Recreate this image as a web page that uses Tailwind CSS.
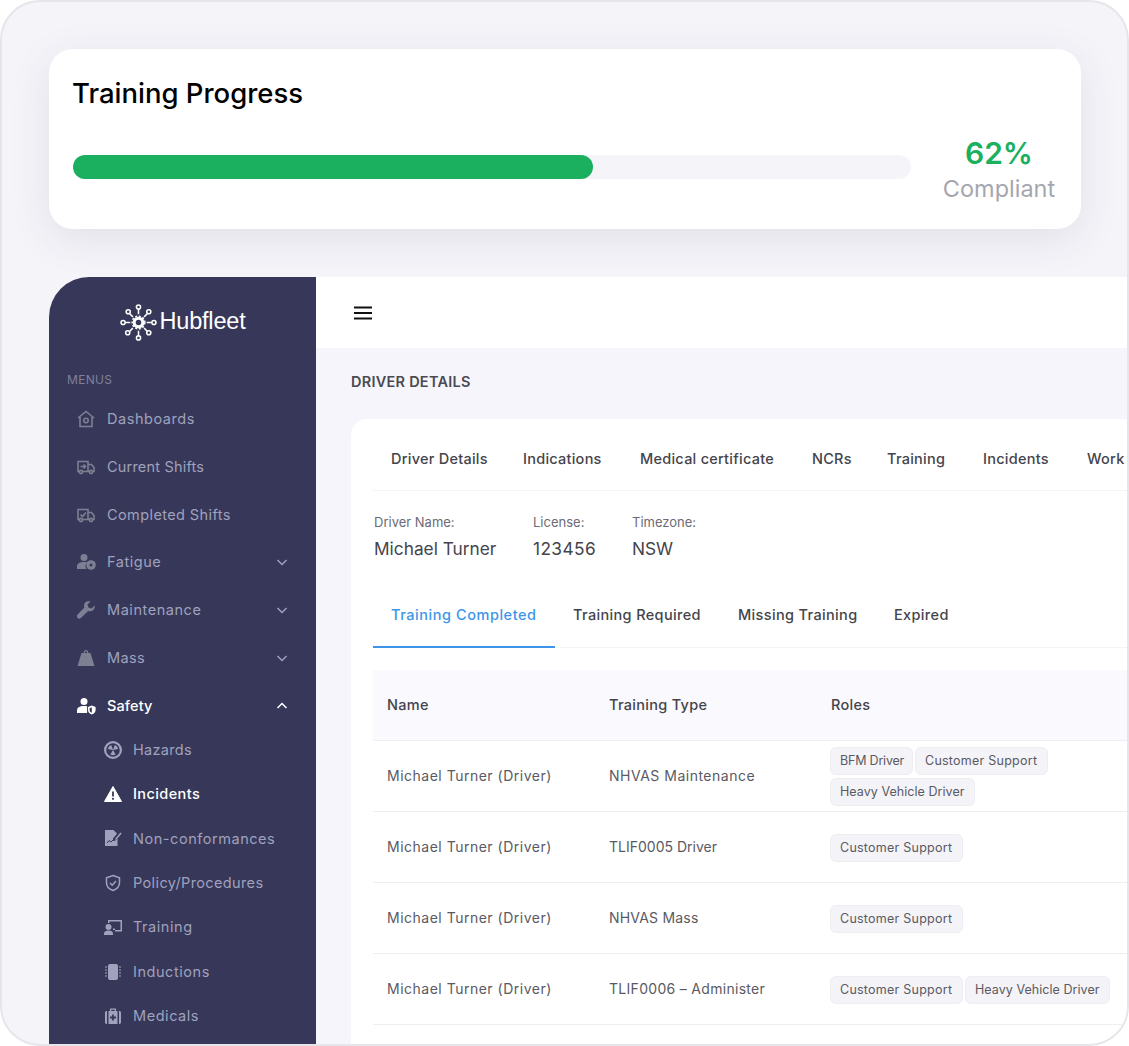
<!DOCTYPE html>
<html lang="en">
<head>
  <meta charset="UTF-8">
  <title>Training Progress</title>
  <script src="https://cdn.jsdelivr.net/npm/@tailwindcss/browser@4"></script>
</head>
<body class="bg-white font-['Inter',sans-serif]">
  <div class="w-[1129px] h-[1046px] overflow-hidden rounded-[40px] border-2 border-[#e6e5ea] bg-[#f5f4f9] pt-[47px] pl-[47px]">

    <!-- training progress card -->
    <section class="w-[1032px] h-[180px] bg-white rounded-[24px] shadow-[0_10px_40px_rgba(60,55,90,0.10)] pt-[26px] px-[24px]">
      <h1 class="text-[27.5px] leading-[36px] -ml-[1px] font-medium text-black">Training Progress</h1>
      <div class="flex items-center mt-[18px]">
        <div class="w-[838px] h-[24px] shrink-0 rounded-full bg-[#f5f4f8]">
          <div class="w-[520px] h-[24px] rounded-full bg-[#1bb05f]"></div>
        </div>
        <div class="w-[146px] shrink-0 text-center ml-[15px] mt-[6px]">
          <div class="text-[30px] leading-[37px] font-semibold text-[#1bb05f]">62%</div>
          <div class="text-[23.5px] leading-[33px] text-[#a6a6ae]">Compliant</div>
        </div>
      </div>
    </section>

    <!-- dashboard -->
    <div class="flex w-[1100px] h-[800px] mt-[48px]">
      <aside class="w-[267px] shrink-0 bg-[#373859] rounded-tl-[40px] text-[#9fa1bd] text-[14.5px] tracking-[0.55px]">
        <div class="flex items-center justify-center h-[90px] gap-[3px] tracking-normal">
          <svg class="w-[37px] h-[37px]" viewBox="0 0 36 36" fill="none" stroke="white" stroke-width="1.5">
            <circle cx="18" cy="18" r="4.2" stroke-width="3"/>
            <circle cx="18" cy="18" r="6.2" stroke-width="1.4" stroke-dasharray="2 1.6"/>
            <path d="M18 10V5M18 26v5M10 18H5M26 18h5M12.5 12.5l-3-3M23.5 12.5l3-3M12.5 23.5l-3 3M23.5 23.5l3 3"/>
            <circle cx="18" cy="3" r="2"/><circle cx="18" cy="33" r="2"/><circle cx="3" cy="18" r="2"/><circle cx="33" cy="18" r="2"/>
            <circle cx="8" cy="7.5" r="2"/><circle cx="28" cy="7.5" r="2"/><circle cx="7.5" cy="28" r="2"/><circle cx="28" cy="28" r="2"/>
          </svg>
          <span class="text-[23.5px] text-white font-['Liberation_Sans',sans-serif] tracking-[-0.2px]">Hubfleet</span>
        </div>
        <div class="pl-[18px] h-[13px] mt-[6px] text-[12px] leading-[13px] text-[#7f8099] tracking-[0.3px]">MENUS</div>

        <nav class="mt-[8px]">
          <a class="flex items-center h-[48px] pl-[28px] pr-[28px] pt-[2px] gap-[12px]">
            <svg class="w-[18px] h-[18px] text-[#7d7f92]" viewBox="0 0 18 18" fill="none" stroke="currentColor" stroke-width="1.6"><path d="M1 8l8-6.5L17 8M3 7v9.5h12V7"/><circle cx="9" cy="10.5" r="2.2"/></svg>
            <span>Dashboards</span>
          </a>
          <a class="flex items-center h-[48px] pl-[28px] pr-[28px] pt-[2px] gap-[12px]">
            <svg class="w-[18px] h-[18px] text-[#7d7f92]" viewBox="0 0 18 18" fill="none" stroke="currentColor" stroke-width="1.6"><path d="M2 13.5H1V3.5h10v10H6M11 6.5h3.5l2.5 3v4h-1.5M11 13.5h1"/><path d="M3.5 8.5h5M6.5 6.5l2 2-2 2"/><circle cx="4" cy="14" r="1.6"/><circle cx="14" cy="14" r="1.6"/></svg>
            <span class="tracking-[0.2px]">Current Shifts</span>
          </a>
          <a class="flex items-center h-[48px] pl-[28px] pr-[28px] pt-[2px] gap-[12px]">
            <svg class="w-[18px] h-[18px] text-[#7d7f92]" viewBox="0 0 18 18" fill="none" stroke="currentColor" stroke-width="1.6"><path d="M2 13.5H1V3.5h10v10H6M11 6.5h3.5l2.5 3v4h-1.5M11 13.5h1"/><path d="M3.5 8.5l2 2 3.5-4"/><circle cx="4" cy="14" r="1.6"/><circle cx="14" cy="14" r="1.6"/></svg>
            <span class="tracking-[0.4px]">Completed Shifts</span>
          </a>
          <a class="flex items-center h-[48px] pl-[28px] pr-[28px] gap-[11px]">
            <svg class="w-[19px] h-[18px] text-[#7d7f92]" viewBox="0 0 19 18" fill="currentColor"><circle cx="7" cy="4.5" r="3.5"/><path d="M0 16v-2.5C0 10.5 2.5 9 7 9c1.3 0 2.4.1 3.3.4A5 5 0 0 0 9.5 16z"/><circle cx="14" cy="12" r="4.8"/><circle cx="14" cy="12" r="1.5" fill="#373859"/></svg>
            <span>Fatigue</span>
            <svg class="ml-auto w-[12px] h-[12px]" viewBox="0 0 12 12" fill="none" stroke="#9fa1bd" stroke-width="1.5"><path d="M1.5 4L6 8.5 10.5 4"/></svg>
          </a>
          <a class="flex items-center h-[48px] pl-[28px] pr-[28px] gap-[12px]">
            <svg class="w-[18px] h-[18px] text-[#7d7f92]" viewBox="0 0 18 18" fill="currentColor"><path d="M17.5 4.5l-3 3-3-1-1-3 3-3C10.5-.5 7 1 7 4.5c0 .8.1 1.3.4 1.9L.6 13.6a2.3 2.3 0 0 0 3.3 3.3l7.2-6.8c3.4 1.2 7.4-1.7 6.4-5.6z"/></svg>
            <span>Maintenance</span>
            <svg class="ml-auto w-[12px] h-[12px]" viewBox="0 0 12 12" fill="none" stroke="#9fa1bd" stroke-width="1.5"><path d="M1.5 4L6 8.5 10.5 4"/></svg>
          </a>
          <a class="flex items-center h-[48px] pl-[28px] pr-[28px] gap-[12px]">
            <svg class="w-[18px] h-[18px] text-[#7d7f92]" viewBox="0 0 18 18" fill="currentColor"><path d="M6.8 4a2.3 2.3 0 1 1 4.4 0h2.3L17.5 17H.5L4.5 4zM8 3.3a1 1 0 1 0 2 0 1 1 0 0 0-2 0z"/></svg>
            <span class="tracking-[0.4px]">Mass</span>
            <svg class="ml-auto w-[12px] h-[12px]" viewBox="0 0 12 12" fill="none" stroke="#9fa1bd" stroke-width="1.5"><path d="M1.5 4L6 8.5 10.5 4"/></svg>
          </a>
          <a class="flex items-center h-[48px] pl-[28px] pr-[28px] gap-[11px] text-white font-medium">
            <svg class="w-[19px] h-[18px]" viewBox="0 0 19 18" fill="white"><circle cx="7" cy="4.5" r="3.5"/><path d="M0 16v-2.5C0 10.5 2.5 9 7 9c1.2 0 2.2.1 3.1.3V16z"/><path d="M11 10l3.8-1.5 3.8 1.5v3c0 2.2-1.5 3.7-3.8 4.5-2.3-.8-3.8-2.3-3.8-4.5z"/><path d="M14.8 10.3v5.5c-1.5-.6-2.2-1.5-2.2-2.8v-1.7z" fill="#373859"/></svg>
            <span class="tracking-[0.1px]">Safety</span>
            <svg class="ml-auto w-[12px] h-[12px]" viewBox="0 0 12 12" fill="none" stroke="white" stroke-width="1.5"><path d="M1.5 8L6 3.5 10.5 8"/></svg>
          </a>
        </nav>

        <div class="flex flex-col">
          <a class="flex items-center h-[44.4px] -mt-[2px] pl-[55px] gap-[11px]">
            <svg class="w-[18px] h-[18px] text-[#a0a2bd]" viewBox="0 0 18 18" fill="currentColor"><circle cx="9" cy="9" r="7.9" fill="none" stroke="currentColor" stroke-width="2.2"/><path d="M9 9L3.9 8.1A5.2 5.2 0 0 1 7.2 4.1zM9 9L10.8 4.1A5.2 5.2 0 0 1 14.1 8.1zM9 9L11.6 13.5A5.2 5.2 0 0 1 6.4 13.5z"/></svg>
            <span class="tracking-[0.3px]">Hazards</span>
          </a>
          <a class="flex items-center h-[44.4px] -mt-[0.5px] pl-[55px] gap-[11px] text-white font-medium">
            <svg class="w-[18px] h-[18px]" viewBox="0 0 18 18"><path d="M9 1.5L17.5 16.5H.5z" fill="white" stroke="white" stroke-linejoin="round"/><path d="M9 6.5v5" stroke="#373859" stroke-width="1.8"/><circle cx="9" cy="13.8" r="1.1" fill="#373859"/></svg>
            <span class="tracking-[0.4px]">Incidents</span>
          </a>
          <a class="flex items-center h-[44.4px] pl-[55px] gap-[11px]">
            <svg class="w-[18px] h-[18px] text-[#a0a2bd]" viewBox="0 0 18 18" fill="currentColor"><path d="M1 1h8.5L13 4.5 9 9.5V12l2.5-.5 2-2V17H1z"/><path d="M11 10l5.500-6.500 1.200 1L12 11z"/><path d="M3 14l2-2.500 2 1.500 2-2" fill="none" stroke="#373859" stroke-width="1"/></svg>
            <span>Non-conformances</span>
          </a>
          <a class="flex items-center h-[44.4px] pl-[55px] gap-[11px]">
            <svg class="w-[18px] h-[18px] text-[#a0a2bd]" viewBox="0 0 18 18" fill="none" stroke="currentColor" stroke-width="1.5"><path d="M9 1.5l6.5 2.3v5c0 3.700-2.600 6.300-6.500 7.700-3.900-1.400-6.500-4-6.500-7.700v-5z"/><path d="M6 9l2.200 2.200L12 7"/></svg>
            <span class="tracking-[0.37px]">Policy/Procedures</span>
          </a>
          <a class="flex items-center h-[44.4px] pl-[55px] gap-[11px]">
            <svg class="w-[18px] h-[18px] text-[#a0a2bd]" viewBox="0 0 18 18" fill="currentColor"><circle cx="4.5" cy="9" r="3"/><path d="M0 17v-1.500C0 13.500 2 12.500 4.500 12.500S9 13.500 9 15.500V17z"/><path d="M4 2h14v11.500h-7V12h5.500V3.500H5.500V5H4z"/><path d="M9 10.500h2v1.500H9z"/></svg>
            <span>Training</span>
          </a>
          <a class="flex items-center h-[44.4px] pl-[55px] gap-[11px]">
            <svg class="w-[18px] h-[18px] text-[#a0a2bd]" viewBox="0 0 18 18" fill="currentColor"><rect x="4" y="1" width="10" height="16" rx="2"/><path d="M1 4h2M1 7h2M1 10h2M1 13h2M15 4h2M15 7h2M15 10h2M15 13h2" stroke="currentColor" stroke-width="1"/></svg>
            <span>Inductions</span>
          </a>
          <a class="flex items-center h-[44.4px] pl-[55px] gap-[11px]">
            <svg class="w-[18px] h-[18px] text-[#a0a2bd]" viewBox="0 0 18 18" fill="currentColor"><path d="M6 4V1.500h6V4h-1.300V2.800H7.300V4z"/><path d="M4.500 4h9v13h-9zM1 5.500C1 4.700 1.700 4 3 4v13c-1.300 0-2-.7-2-1.500zM15 4c1.300 0 2 .7 2 1.500v10c0 .8-.7 1.500-2 1.500z"/><path d="M9 7.500v6M6 10.500h6" stroke="#373859" stroke-width="1.800"/></svg>
            <span>Medicals</span>
          </a>
        </div>
      </aside>

      <div class="flex-1 min-w-0 bg-[#f7f5fc]">
        <header class="h-[71px] bg-white flex items-center pl-[38px]">
          <svg class="w-[18px] h-[14px]" viewBox="0 0 18 14" fill="none" stroke="#111" stroke-width="2"><path d="M0 1.500h18M0 7h18M0 12.500h18"/></svg>
        </header>
        <h2 class="h-[67px] mb-[4px] pl-[35px] flex items-center text-[14.5px] font-semibold text-[#4a4a52] tracking-[0.25px]">DRIVER DETAILS</h2>

        <section class="ml-[35px] bg-white rounded-tl-[16px] w-[790px] h-[640px] pl-[22px] text-[#44444c]">
          <div class="flex h-[72px] border-b border-[#f4f3f7] pl-[18px] pt-[8px] gap-[36px] items-center text-[14.5px] font-medium whitespace-nowrap tracking-[0.25px]">
            <span class="w-[96px]">Driver Details</span>
            <span class="w-[81px]">Indications</span>
            <span class="w-[136px]">Medical certificate</span>
            <span class="w-[39px]">NCRs</span>
            <span class="w-[60px]">Training</span>
            <span class="w-[68px]">Incidents</span>
            <span>Work</span>
          </div>

          <div class="flex mt-[24px] ml-[1px] h-[50px]">
            <div class="w-[159px]">
              <div class="text-[13px] leading-[14px] text-[#6b6b75]">Driver Name:</div>
              <div class="text-[17.3px] leading-[24px] mt-[8px]">Michael Turner</div>
            </div>
            <div class="w-[99px]">
              <div class="text-[13px] leading-[14px] text-[#6b6b75]">License:</div>
              <div class="text-[17.3px] leading-[24px] mt-[8px] tracking-[0.4px]">123456</div>
            </div>
            <div>
              <div class="text-[13px] leading-[14px] text-[#6b6b75]">Timezone:</div>
              <div class="text-[17.3px] leading-[24px] mt-[8px]">NSW</div>
            </div>
          </div>

          <div class="flex h-[62px] mt-[21px] border-b border-[#f4f3f7] text-[14.5px] font-medium whitespace-nowrap tracking-[0.35px]">
            <span class="w-[182px] pl-[18px] pt-[18px] text-[#3e95e8] border-b-2 border-[#3e95e8] h-[62px] tracking-[0.55px]">Training Completed</span>
            <span class="w-[165px] pl-[18px] pt-[18px]">Training Required</span>
            <span class="w-[156px] pl-[18px] pt-[18px]">Missing Training</span>
            <span class="pl-[18px] pt-[18px]">Expired</span>
          </div>

          <div class="mt-[22px] grid grid-cols-[222px_222px_1fr] h-[71px] items-center bg-[#faf9fd] border-b border-[#efeef3] pl-[14px] text-[14.5px] font-medium tracking-[0.3px]">
            <span>Name</span><span>Training Type</span><span>Roles</span>
          </div>
          <div class="grid grid-cols-[222px_222px_1fr] h-[71px] pb-[2px] items-center border-b border-[#efeef3] pl-[14px] text-[14px] text-[#5a5a63] tracking-[0.5px]">
            <span>Michael Turner (Driver)</span><span>NHVAS Maintenance</span>
            <div class="flex flex-wrap gap-x-[2px] gap-y-[3px] -ml-[1px] pt-[3px] tracking-[0.25px]">
              <span class="bg-[#f4f3f7] border border-[#eeedf2] rounded-[6px] w-[83px] pl-[9px] h-[28px] leading-[26px] text-[12.5px] tracking-[-0.2px]">BFM Driver</span>
              <span class="bg-[#f4f3f7] border border-[#eeedf2] rounded-[6px] w-[133px] pl-[9px] h-[28px] leading-[26px] text-[12.5px]">Customer Support</span>
              <span class="bg-[#f4f3f7] border border-[#eeedf2] rounded-[6px] w-[145px] pl-[9px] h-[28px] leading-[26px] text-[12.5px] tracking-[0.05px]">Heavy Vehicle Driver</span>
            </div>
          </div>
          <div class="grid grid-cols-[222px_222px_1fr] h-[71px] pb-[2px] items-center border-b border-[#efeef3] pl-[14px] text-[14px] text-[#5a5a63] tracking-[0.5px]">
            <span>Michael Turner (Driver)</span><span class="tracking-[0px]">TLIF0005 Driver</span>
            <div class="flex flex-wrap gap-x-[2px] -ml-[1px] pt-[4px] tracking-[0.25px]">
              <span class="bg-[#f4f3f7] border border-[#eeedf2] rounded-[6px] w-[133px] pl-[9px] h-[28px] leading-[26px] text-[12.5px]">Customer Support</span>
            </div>
          </div>
          <div class="grid grid-cols-[222px_222px_1fr] h-[71px] pb-[2px] items-center border-b border-[#efeef3] pl-[14px] text-[14px] text-[#5a5a63] tracking-[0.5px]">
            <span>Michael Turner (Driver)</span><span class="tracking-[0.2px]">NHVAS Mass</span>
            <div class="flex flex-wrap gap-x-[2px] -ml-[1px] pt-[4px] tracking-[0.25px]">
              <span class="bg-[#f4f3f7] border border-[#eeedf2] rounded-[6px] w-[133px] pl-[9px] h-[28px] leading-[26px] text-[12.5px]">Customer Support</span>
            </div>
          </div>
          <div class="grid grid-cols-[222px_222px_1fr] h-[71px] pb-[2px] items-center border-b border-[#efeef3] pl-[14px] text-[14px] text-[#5a5a63] tracking-[0.5px]">
            <span>Michael Turner (Driver)</span><span class="tracking-[0.3px]">TLIF0006 – Administer</span>
            <div class="flex flex-wrap gap-x-[2px] -ml-[1px] pt-[4px] tracking-[0.25px]">
              <span class="bg-[#f4f3f7] border border-[#eeedf2] rounded-[6px] w-[133px] pl-[9px] h-[28px] leading-[26px] text-[12.5px]">Customer Support</span>
              <span class="bg-[#f4f3f7] border border-[#eeedf2] rounded-[6px] w-[145px] pl-[9px] h-[28px] leading-[26px] text-[12.5px] tracking-[0.05px]">Heavy Vehicle Driver</span>
            </div>
          </div>
        </section>
      </div>
    </div>
  </div>
</body>
</html>
